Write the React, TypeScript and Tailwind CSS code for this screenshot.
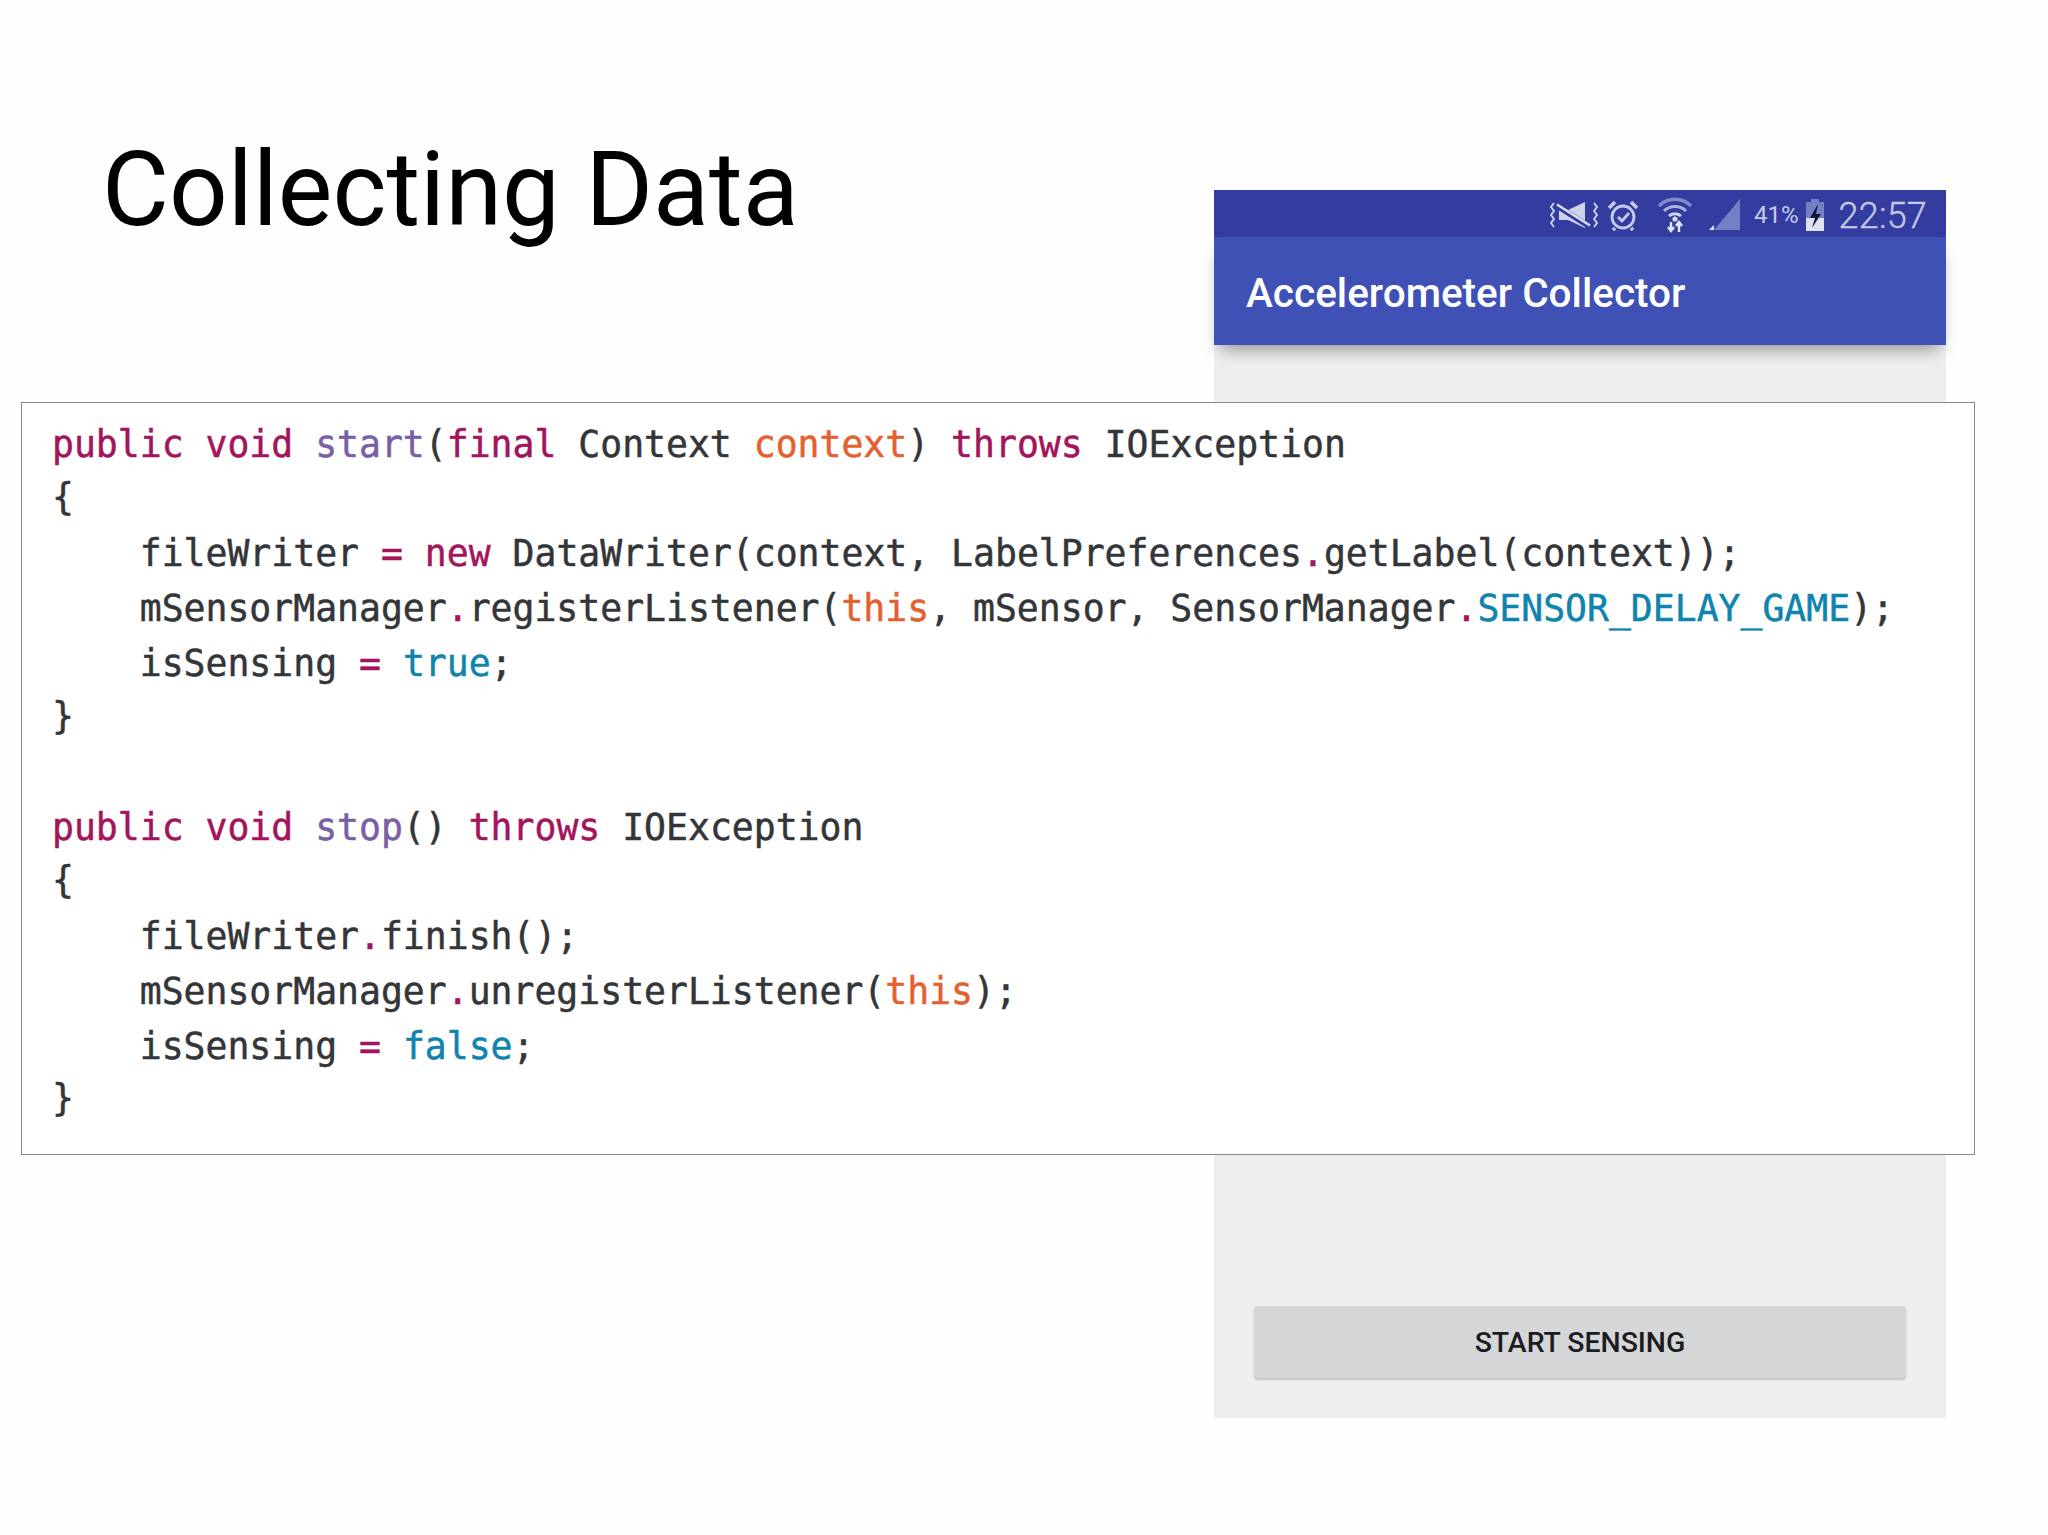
const K = ({ children }: { children: React.ReactNode }) => <span className="text-[#a3145c]">{children}</span>;
const F = ({ children }: { children: React.ReactNode }) => <span className="text-[#7a5fa5]">{children}</span>;
const O = ({ children }: { children: React.ReactNode }) => <span className="text-[#e4602f]">{children}</span>;
const B = ({ children }: { children: React.ReactNode }) => <span className="text-[#0f84ad]">{children}</span>;
const Brace = ({ children }: { children: React.ReactNode }) => <span className="inline-block -translate-y-[2px]">{children}</span>;

function StatusIcons() {
  return (
    <div className="flex items-center pt-[2px] text-[#c5cbe9]">
      <svg width="48" height="30" viewBox="0 0 48 30" className="mr-[9px]" fill="none">
        <path d="M4 3L1 7l3 4-3 4 3 4-3 4 3 4" stroke="#d5d9ee" strokeWidth="1.8" />
        <path d="M44 3l3 4-3 4 3 4-3 4 3 4-3 4" stroke="#d5d9ee" strokeWidth="1.8" />
        <path d="M9 10h9L35 2v26l-17-8H9z" fill="#ced3ec" />
        <path d="M7 6L40 27" stroke="#343d9f" strokeWidth="5.5" />
        <path d="M7 4.5L40 25.5" stroke="#dfe2f2" strokeWidth="2.4" />
      </svg>
      <svg width="32" height="32" viewBox="0 0 32 32" fill="none" stroke="#c5cbe9" strokeWidth="2.8" className="mr-[18px]">
        <circle cx="16" cy="18" r="11" />
        <path d="M11 18l4 4 7-8" />
        <path d="M2 9l6-6M30 9l-6-6M8 29l-2 2M24 29l2 2" strokeWidth="3.6" />
      </svg>
      <svg width="36" height="36" viewBox="0 0 36 36" fill="none" className="mr-[16px]">
        <path d="M2 9c9-9 23-9 32 0" stroke="#7f8acb" strokeWidth="3.4" />
        <path d="M7 14c6-6 16-6 22 0" stroke="#aab2dd" strokeWidth="3" />
        <path d="M12 19c3-3 9-3 12 0" stroke="#d5d9ee" strokeWidth="3" />
        <circle cx="18" cy="22" r="2.6" fill="#d5d9ee" />
        <path d="M14 25v9M11 30l3 4 3-4" stroke="#e2e5f4" strokeWidth="2.4" />
        <path d="M22 35v-9M19 29l3-4 3 4" stroke="#e2e5f4" strokeWidth="2.4" />
      </svg>
      <svg width="34" height="32" viewBox="0 0 34 32" className="mr-[11px]">
        <path d="M31 0v31H5z" fill="#7480c6" />
        <path d="M0 31l5-5v5z" fill="#e2e5f4" />
      </svg>
      <span className="font-['Roboto',sans-serif] text-[24px] leading-none mr-[6px]">41%</span>
      <svg width="20" height="32" viewBox="0 0 20 32" className="mr-[14px]">
        <path d="M6 0h8v3h5v29H1V3h5z" fill="#7480c6" />
        <path d="M1 19h18v13H1z" fill="#dfe2f2" />
        <path d="M13 5L5 19h5l-3 10 9-14h-5l2-10z" fill="#14163a" />
      </svg>
      <span className="pt-[2px] font-['Roboto',sans-serif] font-light text-[36px] leading-none tracking-[0.2px] [-webkit-text-stroke:0.3px]">22:57</span>
    </div>
  );
}

export default function App() {
  return (
    <div className="relative h-[1535px] w-[2048px] overflow-hidden bg-[#fefefe] font-['Roboto',sans-serif]">
      <h1 className="pl-[102px] pt-[130px] text-[103px] leading-[120px] font-normal text-black">Collecting Data</h1>

      <div className="absolute left-[1214px] top-[190px] flex h-[1228px] w-[732px] flex-col bg-[#eeedf0]">
        <div className="flex h-[47px] items-center justify-end bg-[#343d9f] pr-[19px]">
          <StatusIcons />
        </div>
        <div className="flex h-[108px] items-center bg-[#4051b5] pl-[32px] shadow-[0_10px_16px_-6px_rgba(0,0,0,0.4)]">
          <span className="pt-[4px] text-[40.5px] font-medium leading-none text-white">Accelerometer Collector</span>
        </div>
        <div className="flex-1" />
        <div className="mx-[40px] mb-[40px] flex h-[72px] items-center justify-center rounded-[4px] bg-[#d5d6d8] pt-[2px] shadow-[0_2px_2px_rgba(0,0,0,0.18)]">
          <span className="text-[28.4px] font-medium leading-none text-[#1c1c1e]">START SENSING</span>
        </div>
      </div>

      <div className="relative ml-[21px] mt-[152px] h-[753px] w-[1954px] border border-[#8a8a8a] bg-white pl-[30px] pt-[15px]">
        <pre className="font-['DejaVu_Sans_Mono',monospace] text-[36.43px] leading-[54.7px] text-[#333538] [-webkit-text-stroke:0.5px]">
          <div><K>public void</K> <F>start</F>(<K>final</K> Context <O>context</O>) <K>throws</K> IOException</div>
          <div><Brace>{"{"}</Brace></div>
          <div>{"    "}fileWriter <K>=</K> <K>new</K> DataWriter(context, LabelPreferences<K>.</K>getLabel(context));</div>
          <div>{"    "}mSensorManager<K>.</K>registerListener(<O>this</O>, mSensor, SensorManager<K>.</K><B>SENSOR_DELAY_GAME</B>);</div>
          <div>{"    "}isSensing <K>=</K> <B>true</B>;</div>
          <div><Brace>{"}"}</Brace></div>
          <div>&nbsp;</div>
          <div><K>public void</K> <F>stop</F>() <K>throws</K> IOException</div>
          <div><Brace>{"{"}</Brace></div>
          <div>{"    "}fileWriter<K>.</K>finish();</div>
          <div>{"    "}mSensorManager<K>.</K>unregisterListener(<O>this</O>);</div>
          <div>{"    "}isSensing <K>=</K> <B>false</B>;</div>
          <div><Brace>{"}"}</Brace></div>
        </pre>
      </div>
    </div>
  );
}
